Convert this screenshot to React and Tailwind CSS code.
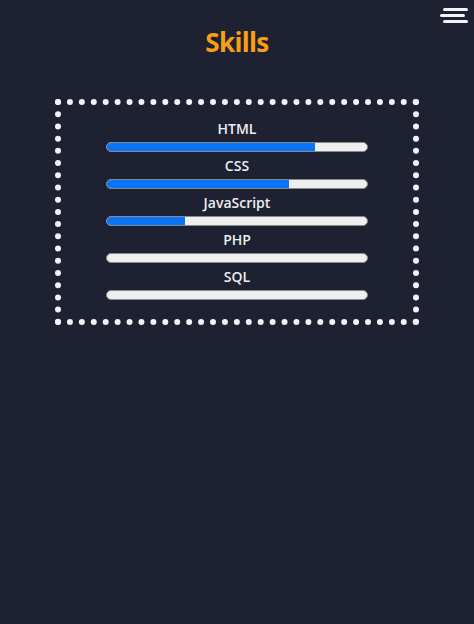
const skills = [
  { name: "HTML", level: 80 },
  { name: "CSS", level: 70 },
  { name: "JavaScript", level: 30 },
  { name: "PHP", level: 0 },
  { name: "SQL", level: 0 },
];

const MenuIcon = () => (
  <button className="absolute top-[8px] right-[6px] flex flex-col items-end gap-[3px]">
    <span className="block w-[25px] h-[3px] rounded-full bg-[#f3f3f7]" />
    <span className="block w-[25px] h-[3px] rounded-full bg-[#f3f3f7] mr-[3px]" />
    <span className="block w-[25px] h-[3px] rounded-full bg-[#f3f3f7]" />
  </button>
);

const App = () => {
  return (
    <div
      className="relative min-h-screen bg-[#1e2131] flex flex-col items-center"
      style={{ fontFamily: '"Open Sans", "Noto Sans", sans-serif' }}
    >
      <MenuIcon />

      {/* TITLE */}
      <h1 className="pt-[26px] text-[26px] leading-[32px] font-bold text-[#f9a012] tracking-tight">
        Skills
      </h1>

      {/* SKILLS BOX */}
      <div className="mt-[41px] w-[364px] border-[6px] border-dotted border-[#f3f3f7] pt-[14px] pb-[19px] flex flex-col items-center gap-[4px]">
        {skills.map((skill) => (
          <div key={skill.name} className="flex flex-col items-center">
            <p className="text-[14px] leading-5 font-semibold text-[#eeeef2]">
              {skill.name}
            </p>
            <div className="mt-[3px] w-[262px] h-[10px] rounded-full bg-[#efefef] border border-[#8a8a8a] overflow-hidden">
              <div
                className="h-full bg-[#0a74f6]"
                style={{ width: `${skill.level}%` }}
              />
            </div>
          </div>
        ))}
      </div>
    </div>
  );
};

export default App;
